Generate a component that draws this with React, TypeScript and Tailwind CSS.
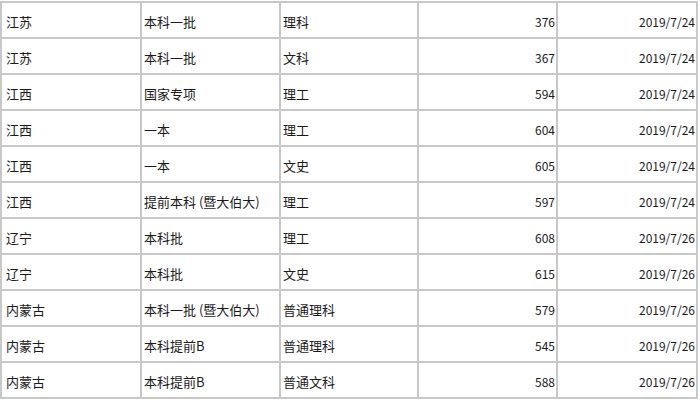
import React from 'react';

const rows = [
  ['江苏', '本科一批', '理科', '376', '2019/7/24'],
  ['江苏', '本科一批', '文科', '367', '2019/7/24'],
  ['江西', '国家专项', '理工', '594', '2019/7/24'],
  ['江西', '一本', '理工', '604', '2019/7/24'],
  ['江西', '一本', '文史', '605', '2019/7/24'],
  ['江西', '提前本科 (暨大伯大)', '理工', '597', '2019/7/24'],
  ['辽宁', '本科批', '理工', '608', '2019/7/26'],
  ['辽宁', '本科批', '文史', '615', '2019/7/26'],
  ['内蒙古', '本科一批 (暨大伯大)', '普通理科', '579', '2019/7/26'],
  ['内蒙古', '本科提前B', '普通理科', '545', '2019/7/26'],
  ['内蒙古', '本科提前B', '普通文科', '588', '2019/7/26'],
];

const App = () => {
  return (
    <div className="w-[700px] h-[400px] overflow-hidden bg-white pt-px">
      <div
        className="grid w-[698px] grid-cols-[138px_137px_136px_137px_138px] auto-rows-[34px] gap-[2px] bg-[#c8c8c8] p-[2px] text-[13px] text-[#1a1a1a]"
        style={{ fontFamily: '"Noto Sans CJK SC", "Noto Sans", sans-serif' }}
      >
        {rows.map((r, i) => (
          <React.Fragment key={i}>
            {/* text columns */}
            <div className="flex items-center bg-white pl-[4px] pt-[4px] whitespace-nowrap">{r[0]}</div>
            <div className="flex items-center bg-white pl-[2px] pt-[4px] whitespace-nowrap">{r[1]}</div>
            <div className="flex items-center bg-white pl-[2px] pt-[4px] whitespace-nowrap">{r[2]}</div>
            {/* score + date, right aligned */}
            <div className="flex items-center justify-end bg-white pr-px pt-[4px] text-[12px] whitespace-nowrap">{r[3]}</div>
            <div className="flex items-center justify-end bg-white pr-px pt-[4px] text-[12px] whitespace-nowrap">{r[4]}</div>
          </React.Fragment>
        ))}
      </div>
    </div>
  );
};

export default App;
